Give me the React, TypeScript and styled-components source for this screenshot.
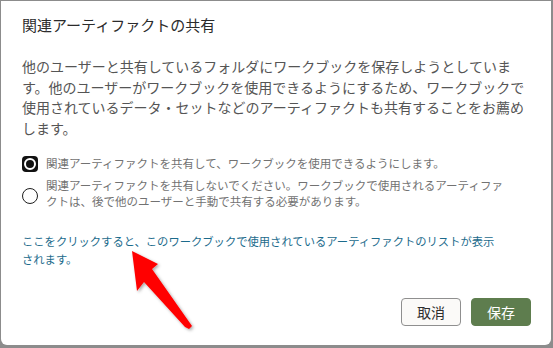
import React, { useState } from "react";
import styled, { createGlobalStyle } from "styled-components";

const GlobalStyle = createGlobalStyle`
  html, body {
    margin: 0;
    padding: 0;
    background: #8c8c8c;
    font-family: "Noto Sans CJK JP", "Noto Sans", sans-serif;
  }
`;

const Dialog = styled.div`
  position: relative;
  box-sizing: border-box;
  width: 550px;
  height: 344px;
  margin: 1px 0 0 1px;
  padding: 14px 20px 19px 21px;
  background: #ffffff;
  border-radius: 0 0 6px 6px;
  display: flex;
  flex-direction: column;
`;

const Title = styled.h1`
  margin: 0;
  font-size: 15px;
  line-height: 20px;
  font-weight: 400;
  color: #2b2b2b;
`;

const Message = styled.p`
  margin: 21px 0 0;
  font-size: 14px;
  line-height: 20.5px;
  color: #555555;
`;

const Options = styled.div`
  margin-top: 16px;
  display: flex;
  flex-direction: column;
  gap: 5px;
`;

const Option = styled.label`
  display: flex;
  align-items: center;
  gap: 8px;
  cursor: pointer;
`;

const RadioMark = styled.span<{ $checked: boolean }>`
  flex: none;
  box-sizing: border-box;
  width: 16px;
  height: 16px;
  margin-top: ${(p) => (p.$checked ? "2px" : "5px")};
  display: flex;
  align-items: center;
  justify-content: center;
  border-radius: ${(p) => (p.$checked ? "4px" : "50%")};
  background: ${(p) => (p.$checked ? "#111111" : "#ffffff")};
  border: ${(p) => (p.$checked ? "none" : "1.5px solid #1e1e1e")};

  &::after {
    content: "";
    display: ${(p) => (p.$checked ? "block" : "none")};
    box-sizing: border-box;
    width: 12px;
    height: 12px;
    border-radius: 50%;
    border: 2px solid #ffffff;
    background: #111111;
  }
`;

const OptionText = styled.span`
  font-size: 11.5px;
  line-height: 16px;
  color: #727272;
`;

const Link = styled.a`
  margin-top: 23px;
  font-size: 11.3px;
  line-height: 18px;
  color: #1c6b8c;
  text-decoration: none;
  cursor: pointer;
`;

const Footer = styled.div`
  margin-top: auto;
  display: flex;
  justify-content: flex-end;
  gap: 10px;
`;

const Button = styled.button<{ $primary?: boolean }>`
  box-sizing: border-box;
  width: 60px;
  height: 28px;
  padding: 0;
  border-radius: 4px;
  font-family: inherit;
  font-size: 14px;
  border: ${(p) => (p.$primary ? "1px solid #5e7d4e" : "1px solid #8f8f8f")};
  background: ${(p) => (p.$primary ? "#5e7d4e" : "#fbfaf8")};
  color: ${(p) => (p.$primary ? "#ffffff" : "#2e2e2e")};
  cursor: pointer;
`;

const Annotation = styled.svg`
  position: absolute;
  left: 0;
  top: 0;
  pointer-events: none;
`;

const Arrow = () => (
  <Annotation width="550" height="344" viewBox="1 1 550 344">
    <defs>
      <filter id="shadow" x="-20%" y="-20%" width="140%" height="140%">
        <feDropShadow dx="1.5" dy="1.5" stdDeviation="1.5" floodColor="#000" floodOpacity="0.35" />
      </filter>
    </defs>
    <polygon
      points="132,251 158,264 152,269 192,326 189,329 185,327 144,282 137,291"
      fill="#ff0000"
      filter="url(#shadow)"
    />
  </Annotation>
);

export default function App() {
  const [choice, setChoice] = useState(0);

  return (
    <>
      <GlobalStyle />
      <Dialog>
        <Title>関連アーティファクトの共有</Title>
        <Message>
          他のユーザーと共有しているフォルダにワークブックを保存しようとしていま
          <br />
          す。他のユーザーがワークブックを使用できるようにするため、ワークブックで
          <br />
          使用されているデータ・セットなどのアーティファクトも共有することをお薦め
          <br />
          します。
        </Message>
        <Options>
          <Option onClick={() => setChoice(0)}>
            <RadioMark $checked={choice === 0} />
            <OptionText>関連アーティファクトを共有して、ワークブックを使用できるようにします。</OptionText>
          </Option>
          <Option onClick={() => setChoice(1)}>
            <RadioMark $checked={choice === 1} />
            <OptionText>
              関連アーティファクトを共有しないでください。ワークブックで使用されるアーティファ
              <br />
              クトは、後で他のユーザーと手動で共有する必要があります。
            </OptionText>
          </Option>
        </Options>
        <Link>
          ここをクリックすると、このワークブックで使用されているアーティファクトのリストが表示
          <br />
          されます。
        </Link>
        <Footer>
          <Button>取消</Button>
          <Button $primary>保存</Button>
        </Footer>
        <Arrow />
      </Dialog>
    </>
  );
}
